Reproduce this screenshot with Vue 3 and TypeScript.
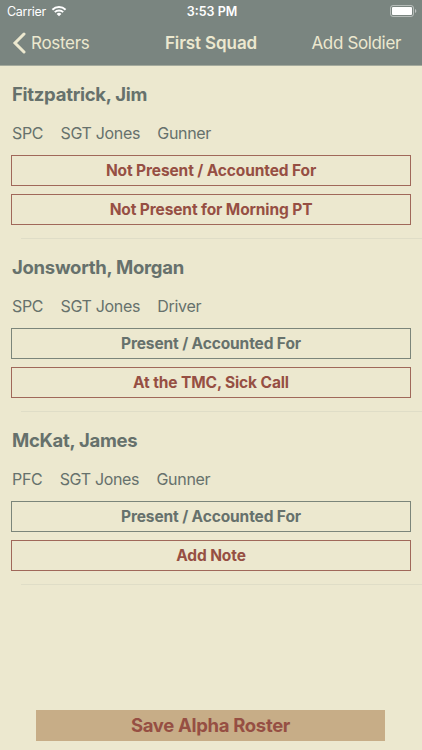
<script setup lang="ts">
interface Soldier {
  name: string
  rank: string
  leader: string
  role: string
  status: string
  present: boolean
  note: string
}

const soldiers: Soldier[] = [
  { name: 'Fitzpatrick, Jim', rank: 'SPC', leader: 'SGT Jones', role: 'Gunner', status: 'Not Present / Accounted For', present: false, note: 'Not Present for Morning PT' },
  { name: 'Jonsworth, Morgan', rank: 'SPC', leader: 'SGT Jones', role: 'Driver', status: 'Present / Accounted For', present: true, note: 'At the TMC, Sick Call' },
  { name: 'McKat, James', rank: 'PFC', leader: 'SGT Jones', role: 'Gunner', status: 'Present / Accounted For', present: true, note: 'Add Note' },
]
</script>

<template>
  <div class="screen">
    <header class="top">
      <div class="status">
        <div class="carrier">
          <span>Carrier</span>
          <svg class="wifi" viewBox="0 0 16 12" width="16" height="12">
            <path d="M1.400 4.700a9.400 9.400 0 0 1 13.200 0M3.800 7.200a5.900 5.900 0 0 1 8.400 0" fill="none" stroke="#fff" stroke-width="1.900" />
            <path d="M8 11.300 5.600 8.900a3.400 3.400 0 0 1 4.800 0z" fill="#fff" />
          </svg>
        </div>
        <span class="time">3:53 PM</span>
        <svg class="battery" viewBox="0 0 27 12" width="27" height="12">
          <rect x=".5" y=".5" width="23" height="11" rx="2.500" fill="none" stroke="#fff" stroke-opacity=".45" />
          <rect x="2" y="2" width="20" height="8" rx="1" fill="#fff" />
          <path d="M25 4v4c1.800-.7 1.800-3.300 0-4z" fill="#fff" fill-opacity=".5" />
        </svg>
      </div>
      <nav class="nav">
        <button class="back">
          <svg viewBox="0 0 14 22" width="14" height="22"><path d="M12 2 3 11l9 9" fill="none" stroke="#ece8cf" stroke-width="3" stroke-linecap="round" /></svg>
          <span>Rosters</span>
        </button>
        <h1>First Squad</h1>
        <button class="add">Add Soldier</button>
      </nav>
    </header>
    <main class="list">
      <section v-for="s in soldiers" :key="s.name" class="row">
        <h2>{{ s.name }}</h2>
        <div class="meta">
          <span>{{ s.rank }}</span><span>{{ s.leader }}</span><span>{{ s.role }}</span>
        </div>
        <button class="box" :class="{ ok: s.present }">{{ s.status }}</button>
        <button class="box">{{ s.note }}</button>
      </section>
    </main>
    <footer><button class="save">Save Alpha Roster</button></footer>
  </div>
</template>

<style>
body { margin: 0; }
</style>

<style scoped>
* { box-sizing: border-box; }
button { font: inherit; color: inherit; letter-spacing: inherit; background: none; border: 0; padding: 0; margin: 0; white-space: nowrap; }
h1, h2 { margin: 0; }
.screen { width: 422px; height: 750px; display: flex; flex-direction: column; background: #ece8cf; font-family: Inter, sans-serif; color: #66716c; overflow: hidden; }
.top { height: 66px; background: #7a8580; border-bottom: 1px solid #a4aa9d; color: #ece8cf; }
.status { height: 22px; display: grid; grid-template-columns: 1fr auto 1fr; align-items: center; padding: 0 5px 0 7px; color: #fff; font-size: 12.5px; }
.carrier { display: flex; align-items: center; gap: 5px; letter-spacing: -0.3px; }
.wifi { margin-top: -1px; }
.time { font-weight: 600; }
.battery { justify-self: end; margin-top: -1px; }
.nav { height: 43px; padding: 0 21px 2px; display: grid; grid-template-columns: 1fr auto 1fr; align-items: center; font-size: 17px; letter-spacing: -0.35px; }
.back { display: flex; align-items: center; gap: 5px; margin-left: -9px; letter-spacing: -0.3px; }
.nav h1 { font-size: 17px; font-weight: 600; letter-spacing: -0.1px; }
.add { justify-self: end; }
.list { flex: 1; }
.row { height: 173px; padding: 15px 11px 0; display: flex; flex-direction: column; background: linear-gradient(#dfddc7, #dfddc7) 21px 100% / 401px 1px no-repeat; }
h2 { height: 26px; line-height: 26px; font-size: 18.5px; font-weight: 700; letter-spacing: -0.28px; padding-left: 1px; }
.meta { display: flex; gap: 17.3px; height: 20px; line-height: 20px; margin: 16px 0 12px 1px; font-size: 16px; letter-spacing: -0.33px; }
.box { height: 31px; flex: none; border: 1px solid #a0685a; color: #964f43; font-size: 15.5px; font-weight: 700; letter-spacing: -0.12px; margin-bottom: 8px; }
.box.ok { border-color: #7b857a; color: #66716c; }
footer { padding: 0 37px 9px 36px; }
.save { display: block; width: 100%; height: 31px; padding-bottom: 2px; background: #c7ad87; color: #964f43; font-size: 18.5px; font-weight: 700; letter-spacing: -0.32px; }
</style>
